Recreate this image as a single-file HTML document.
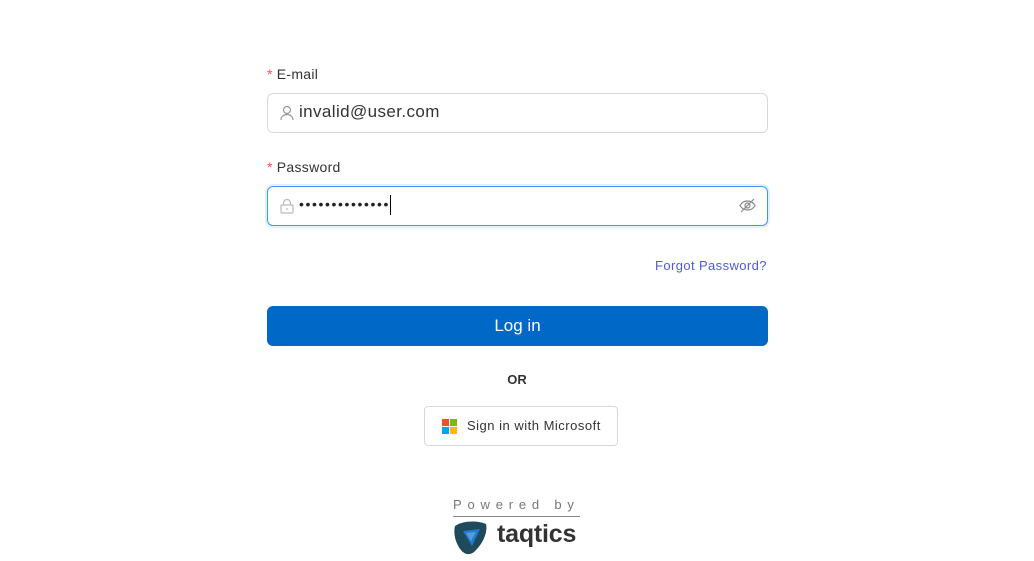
<!DOCTYPE html>
<html><head><style>
body{margin:0;width:1034px;height:561px;background:#fff;font-family:"Liberation Sans",sans-serif;position:relative;overflow:hidden}
.abs{position:absolute;white-space:nowrap}
.lbl{font-size:14px;color:#333;letter-spacing:0.3px}
.lbl b{color:#ff4d4f;font-weight:normal;margin-right:4px}
.inp{left:267px;width:499px;height:38px;border:1px solid #d9d9d9;border-radius:6px;box-sizing:content-box}
</style></head><body>
<div class="abs lbl" style="left:267px;top:66px"><b>*</b>E-mail</div>
<div class="abs inp" style="top:93px"></div>
<svg class="abs" style="left:280px;top:105px" width="14" height="16" viewBox="0 0 14 16" fill="none" stroke="#999" stroke-width="1.2"><circle cx="7" cy="5" r="3.5"/><path d="M1 15c0-3.5 2.7-5.5 6-5.5s6 2 6 5.5"/></svg>
<div class="abs" style="left:299px;top:102px;font-size:17px;color:#333;letter-spacing:0.4px">invalid@user.com</div>
<div class="abs lbl" style="left:267px;top:159px"><b>*</b>Password</div>
<div class="abs inp" style="top:186px;border-color:#4096ff;box-shadow:0 0 0 2px rgba(5,145,255,.12)"></div>
<svg class="abs" style="left:280px;top:198px" width="14" height="16" viewBox="0 0 14 16" fill="none" stroke="#bbb" stroke-width="1.2"><rect x="1" y="7" width="12" height="8" rx="1"/><path d="M3.5 7V5a3.5 3.5 0 0 1 7 0v2"/><path d="M7 10v2"/></svg>
<div class="abs" style="left:299px;top:196px;font-size:14px;color:#222;letter-spacing:1.6px">••••••••••••••</div>
<div class="abs" style="left:390px;top:195px;width:1px;height:20px;background:#000"></div>
<svg class="abs" style="left:739px;top:198px" width="17" height="15" viewBox="0 0 17 15" fill="none" stroke="#888" stroke-width="1.2"><path d="M1 7.5C3 4 5.5 3 8.5 3s5.5 1 7.5 4.5C14 11 11.5 12 8.5 12S3 11 1 7.5z"/><circle cx="8.5" cy="7.5" r="2.5"/><path d="M2 14L15 1"/></svg>
<div class="abs" style="left:655px;top:258px;font-size:13px;color:#4e5bd8;letter-spacing:0.4px">Forgot Password?</div>
<div class="abs" style="left:267px;top:306px;width:501px;height:40px;background:#0068c6;border-radius:6px;color:#fff;font-size:17px;text-align:center;line-height:40px">Log in</div>
<div class="abs" style="left:0;width:1034px;top:372px;text-align:center;font-size:13px;font-weight:bold;color:#333">OR</div>
<div class="abs" style="left:424px;top:406px;width:192px;height:38px;border:1px solid #d9d9d9;border-radius:4px"></div>
<div class="abs" style="left:442px;top:419px;width:7px;height:7px;background:#f25022"></div>
<div class="abs" style="left:450px;top:419px;width:7px;height:7px;background:#7fba00"></div>
<div class="abs" style="left:442px;top:427px;width:7px;height:7px;background:#00a4ef"></div>
<div class="abs" style="left:450px;top:427px;width:7px;height:7px;background:#ffb900"></div>
<div class="abs" style="left:467px;top:418px;font-size:13px;color:#333;letter-spacing:0.5px">Sign in with Microsoft</div>
<div class="abs" style="left:453px;top:497px;font-size:13px;color:#777;letter-spacing:5.8px">Powered by</div>
<div class="abs" style="left:453px;top:516px;width:127px;height:1px;background:#888"></div>
<svg class="abs" style="left:452px;top:520px" width="37" height="36" viewBox="0 0 37 36"><path d="M3 6C10 1 25 0 34 4 36 12 31 24 22 32 17 36 12 34 9 30 4 24 1 14 3 6z" fill="#1e4a5c"/><path d="M11 11L28 9 20 26z" fill="#1f7ad1"/><path d="M14 13l10-1-5 9z" fill="#fff" opacity=".25"/></svg>
<div class="abs" style="left:497px;top:520px;font-size:25px;font-weight:bold;color:#333;letter-spacing:-0.2px">taqtics</div>
</body></html>
